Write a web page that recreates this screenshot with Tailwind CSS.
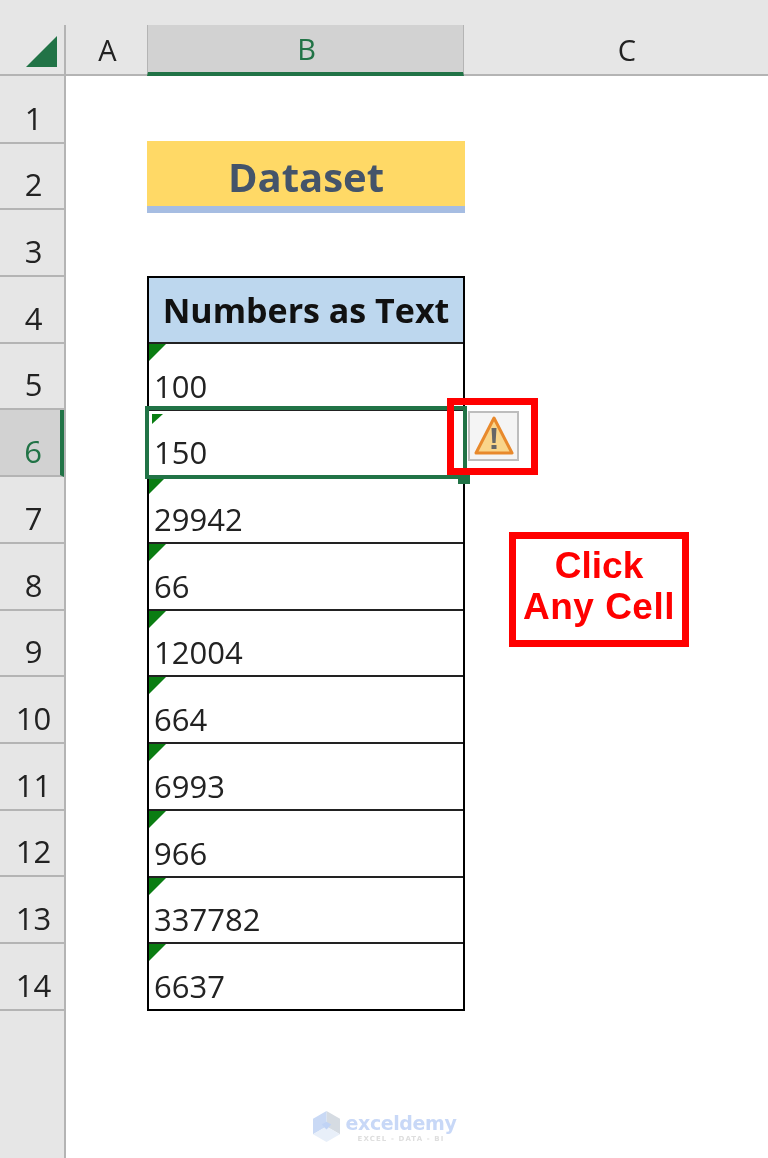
<!DOCTYPE html>
<html lang="en">
<head>
  <meta charset="UTF-8" />
  <title>Numbers as Text</title>
  <script src="https://cdn.jsdelivr.net/npm/@tailwindcss/browser@4"></script>
</head>
<body class="bg-white">
<div class="relative w-[768px] h-[1158px] overflow-hidden blur-[0.5px] font-['Open_Sans',sans-serif] text-[#222]">

  <!-- column headers -->
  <div class="flex h-[76px] bg-[#e6e6e6] border-b-2 border-[#b4b4b4]">
    <div class="w-[66px] mt-[25px] h-[49px] flex items-end justify-end pr-[7px] pb-[7px] border-r-2 border-[#b4b4b4]">
      <svg width="31" height="31" viewBox="0 0 31 31"><path d="M31 0 V31 H0 Z" fill="#217346"/></svg>
    </div>
    <div class="w-[81px] mt-[25px] h-[49px] pl-[2px] flex items-center justify-center text-[29px]">A</div>
    <div class="w-[317px] mt-[25px] h-[51px] pl-[2px] bg-[#d2d2d2] border-b-[4px] border-[#217346] flex items-center justify-center text-[29px] text-[#217346] border-x border-x-[#b4b4b4]">B</div>
    <div class="flex-1 mt-[25px] h-[49px] pl-[22px] flex items-center justify-center text-[29px]">C</div>
  </div>

  <div class="flex">
    <!-- row headers -->
    <div id="rowHeads" class="w-[66px] h-[1082px] pt-[1px] bg-[#e6e6e6] border-r-2 border-[#b4b4b4] text-[31px] leading-[42px]"></div>

    <!-- sheet -->
    <div class="pl-[81px] pt-[65px]">
      <div class="w-[318px] h-[72px] pt-[6px] bg-[#ffd966] border-b-[7px] border-[#a6bde2] flex items-center justify-center text-[40px] font-bold text-[#44546a]">Dataset</div>
      <div class="w-[318px] mt-[63px] border-2 border-black">
        <div class="h-[66px] pt-[1px] bg-[#bdd7ee] border-b-2 border-[#222] flex items-center justify-center text-[34px] font-bold text-[#111]">Numbers as Text</div>
        <div id="cells"></div>
      </div>
    </div>
  </div>

  <!-- selected cell -->
  <div class="absolute left-[145px] top-[406px] w-[322px] h-[73px] border-[4px] border-[#217346]"></div>
  <div class="absolute left-[458px] top-[473px] w-[12px] h-[11px] bg-[#217346]"></div>

  <!-- error button -->
  <div class="absolute left-[468px] top-[411px] w-[51px] h-[50px] bg-[#f4f4f4] border-2 border-[#bdbdbd] flex items-center justify-center">
    <svg width="40" height="40" viewBox="0 0 40 40">
      <path d="M20 2 L38 37 H2 Z" fill="#f9d58a" stroke="#e8892c" stroke-width="3" stroke-linejoin="round"/>
      <path d="M17.5 12 H22.5 L21.6 27 H18.4 Z" fill="#666"/>
      <rect x="17.5" y="29" width="5" height="4" fill="#666"/>
    </svg>
  </div>
  <div class="absolute left-[447px] top-[398px] w-[91px] h-[77px] border-[7px] border-[#ff0000]"></div>

  <!-- callout -->
  <div class="absolute left-[509px] top-[532px] w-[180px] h-[115px] pb-[8px] border-[7px] border-[#ff0000] flex flex-col items-center justify-center font-['Liberation_Sans',sans-serif] font-bold text-[#ff0000] text-[37px] leading-[41px]">
    <span>Click</span>
    <span class="tracking-[0.5px]">Any Cell</span>
  </div>

  <!-- watermark -->
  <div class="absolute left-[313px] top-[1111px] flex items-start gap-[6px]">
    <svg width="27" height="31" viewBox="0 0 28 32">
      <path d="M14 0 L28 8 V24 L14 16 Z" fill="#d5dbe2"/>
      <path d="M14 0 L0 8 V24 L14 16 Z" fill="#c9d9f5"/>
      <path d="M0 24 L14 16 L28 24 L14 32 Z" fill="#e8eff9"/>
      <path d="M14 11 L19 14 L14 19 L9 14 Z" fill="#c0d3f5"/>
    </svg>
    <div class="flex flex-col items-center w-[110px] font-['DejaVu_Sans',sans-serif]">
      <span class="text-[19px] leading-[24px] font-bold text-[#c8d8f7] tracking-[-0.4px] whitespace-nowrap">exceldemy</span>
      <span class="text-[7px] leading-[9px] font-bold text-[#dedede] tracking-[1.1px] whitespace-nowrap">EXCEL - DATA - BI</span>
    </div>
  </div>

</div>

<script>
  // row numbers down the left
  const rowHeads = document.getElementById("rowHeads");
  for (let i = 1; i <= 14; i++) {
    const selected = i === 6;
    const el = document.createElement("div");
    el.className = selected
      ? "h-[66.7px] flex items-end justify-center pb-[3px] pl-[6px] border-b-2 border-[#b4b4b4] bg-[#d2d2d2] text-[#217346] border-r-[4px] border-r-[#217346]"
      : "h-[66.7px] flex items-end justify-center pb-[3px] pl-[3px] border-b-2 border-[#b4b4b4]";
    el.textContent = i;
    rowHeads.appendChild(el);
  }

  // numbers stored as text
  const values = ["100", "150", "29942", "66", "12004", "664", "6993", "966", "337782", "6637"];
  const cells = document.getElementById("cells");
  values.forEach((value, idx) => {
    const selected = idx === 1;
    const el = document.createElement("div");
    el.className = "relative h-[66.7px] flex items-end pl-[5px] text-[31px] leading-[46px] border-b-2 border-[#222] last:border-b-0 last:h-[64.7px]";
    const marker = selected
      ? `<svg class="absolute left-[3px] top-[3px]" width="11" height="10" viewBox="0 0 11 10"><path d="M0 0 H11 L0 10 Z" fill="#0a7d12"/></svg>`
      : `<svg class="absolute left-0 top-0" width="17" height="17" viewBox="0 0 17 17"><path d="M0 0 H17 L0 17 Z" fill="#0a7d12"/></svg>`;
    el.innerHTML = `${marker}<span>${value}</span>`;
    cells.appendChild(el);
  });
</script>
</body>
</html>
